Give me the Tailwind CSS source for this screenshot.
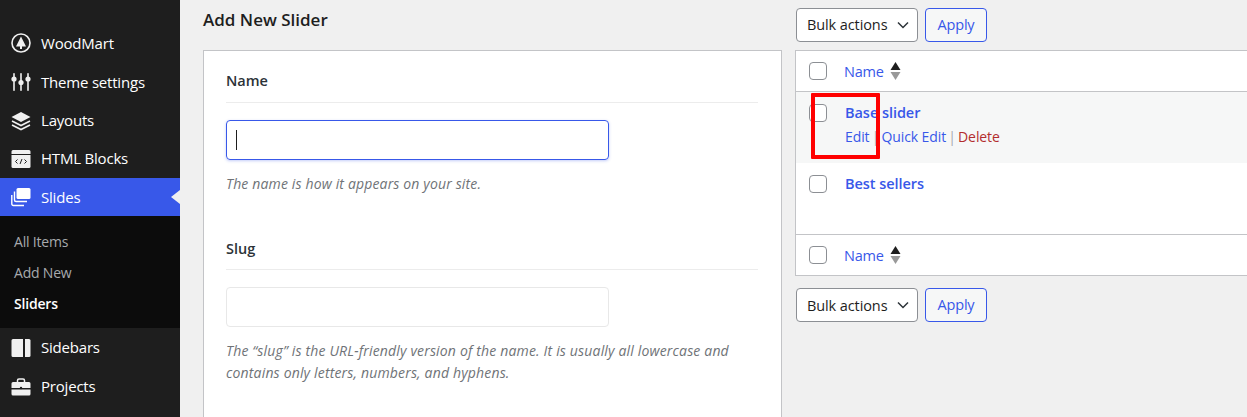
<!DOCTYPE html>
<html lang="en">
<head>
  <meta charset="UTF-8" />
  <title>Add New Slider</title>
  <script src="https://cdn.jsdelivr.net/npm/@tailwindcss/browser@4"></script>
</head>
<body class="bg-[#f0f0f0] text-[#1e1e1e] font-['Open_Sans','Noto_Sans',sans-serif] text-[14.5px] tracking-[-0.2px]">
  <div class="flex h-[417px] overflow-hidden">
    <!-- Sidebar -->
    <aside class="w-[180px] shrink-0 bg-[#1e1e1e] text-white text-[15px] pt-[24px]">
      <a class="flex items-center h-[38px] pl-[11px] gap-[10px]">
        <svg class="w-[20px] h-[20px]" viewBox="0 0 20 20"><circle cx="10" cy="10" r="9" fill="none" stroke="#f0f0f0" stroke-width="1.6"/><path d="M10 3.500 15 13.500H11V16H9V13.500H5Z" fill="#f0f0f0"/></svg>
        <span>WoodMart</span>
      </a>
      <a class="flex items-center h-[40px] pl-[11px] gap-[10px]">
        <svg class="w-[20px] h-[20px]" viewBox="0 0 20 20" fill="#f0f0f0"><rect x="2.200" y="1" width="1.600" height="18" rx=".8"/><rect x="9.200" y="1" width="1.600" height="18" rx=".8"/><rect x="16.200" y="1" width="1.600" height="18" rx=".8"/><circle cx="3" cy="7" r="2.600"/><circle cx="10" cy="10.500" r="2.600"/><circle cx="17" cy="7" r="2.600"/></svg>
        <span>Theme settings</span>
      </a>
      <a class="flex items-center h-[37px] pl-[11px] gap-[10px]">
        <svg class="w-[20px] h-[20px]" viewBox="0 0 20 20"><path d="M10 1 19.500 6 10 11 .5 6Z" fill="#f0f0f0"/><path d="M1 10 10 14.500 19 10M1 14 10 18.500 19 14" fill="none" stroke="#f0f0f0" stroke-width="1.600"/></svg>
        <span>Layouts</span>
      </a>
      <a class="flex items-center h-[39px] pl-[11px] gap-[10px]">
        <svg class="w-[20px] h-[20px]" viewBox="0 0 20 20"><path d="M2 1H18A1.500 1.500 0 0 1 19.500 2.500V5H.5V2.500A1.500 1.500 0 0 1 2 1Z" fill="#f0f0f0"/><path d="M.5 6H19.500V17.500A1.500 1.500 0 0 1 18 19H2A1.500 1.500 0 0 1 .5 17.500Z" fill="#f0f0f0"/><path d="M6.500 10.500 4.500 12.500 6.500 14.500M13.500 10.500 15.500 12.500 13.500 14.500M11 10 9 15" fill="none" stroke="#1e1e1e" stroke-width="1"/></svg>
        <span>HTML Blocks</span>
      </a>
      <a class="relative flex items-center h-[38px] pl-[11px] gap-[10px] bg-[#3858e9]">
        <svg class="w-[20px] h-[20px]" viewBox="0 0 20 20"><rect x="5.500" y="1" width="14" height="11" rx="1.500" fill="#fff"/><path d="M3.500 4.500V13A1.500 1.500 0 0 0 5 14.500H16" fill="none" stroke="#fff" stroke-width="1.400"/><path d="M.8 8V17A1.500 1.500 0 0 0 2.300 18.500H13" fill="none" stroke="#fff" stroke-width="1.400"/></svg>
        <span>Slides</span>
        <span class="absolute right-0 top-[12px] border-y-[7px] border-r-[9px] border-y-transparent border-r-[#f0f0f0]"></span>
      </a>
      <div class="bg-[#0c0c0c] h-[112px] pt-[9px] pl-[14px] text-[14px] text-[#a7aaad]">
        <a class="flex items-center h-[32px]">All Items</a>
        <a class="flex items-center h-[31px]">Add New</a>
        <a class="flex items-center h-[31px] text-white font-semibold">Sliders</a>
      </div>
      <a class="flex items-center h-[39px] pl-[11px] gap-[10px]">
        <svg class="w-[20px] h-[20px]" viewBox="0 0 20 20"><path d="M2 1H12V19H2A1.500 1.500 0 0 1 .5 17.500V2.500A1.500 1.500 0 0 1 2 1Z" fill="#f0f0f0"/><path d="M14 1H18A1.500 1.500 0 0 1 19.500 2.500V17.500A1.500 1.500 0 0 1 18 19H14Z" fill="#f0f0f0"/></svg>
        <span>Sidebars</span>
      </a>
      <a class="flex items-center h-[39px] pl-[11px] gap-[10px]">
        <svg class="w-[20px] h-[20px]" viewBox="0 0 20 20"><path d="M6.500 5V3.500A1.500 1.500 0 0 1 8 2H12A1.500 1.500 0 0 1 13.500 3.500V5" fill="none" stroke="#f0f0f0" stroke-width="1.500"/><path d="M2 5H18A1.500 1.500 0 0 1 19.500 6.500V11H.5V6.500A1.500 1.500 0 0 1 2 5Z" fill="#f0f0f0"/><path d="M.5 12.500H19.500V17A1.500 1.500 0 0 1 18 18.500H2A1.500 1.500 0 0 1 .5 17Z" fill="#f0f0f0"/><circle cx="10" cy="11" r="1.200" fill="#1e1e1e"/></svg>
        <span>Projects</span>
      </a>
    </aside>

    <!-- Add form -->
    <section class="w-[579px] shrink-0 ml-[23px]">
      <h2 class="h-[50px] pt-[8px] text-[17px] font-semibold tracking-normal leading-[24px]">Add New Slider</h2>
      <div class="bg-white border border-[#c3c4c7] h-[400px] px-[22px]">
        <div class="h-[52px] pt-[19px] border-b border-[#ececec] font-semibold text-[14.5px] tracking-normal leading-[22px] text-[#2c3338] w-[532px]">Name</div>
        <div class="mt-[17px] w-[383px] h-[40px] rounded-[4px] border border-[#3858e9] shadow-[0_1px_3px_rgba(56,88,233,0.3)] flex items-center pl-[9px]">
          <span class="w-px h-[20px] bg-[#1e1e1e]"></span>
        </div>
        <p class="mt-[13px] text-[14px] tracking-[0.15px] italic leading-[22px] text-[#6f7377]">The name is how it appears on your site.</p>
        <div class="mt-[43px] h-[32px] border-b border-[#ececec] font-semibold text-[14.5px] tracking-normal leading-[22px] text-[#2c3338] w-[532px]">Slug</div>
        <div class="mt-[17px] w-[383px] h-[40px] rounded-[4px] border border-[#e8e8e8]"></div>
        <p class="mt-[13px] w-[510px] text-[14px] tracking-[0.17px] italic leading-[22px] text-[#6f7377]">The “slug” is the URL-friendly version of the name. It is usually all lowercase and contains only letters, numbers, and hyphens.</p>
      </div>
    </section>

    <!-- Slider list -->
    <section class="relative ml-[13px] flex-1">
      <div class="flex items-center gap-[7px] h-[50px] pl-px pb-[1px]">
        <div class="w-[122px] h-[34px] rounded-[4px] border border-[#8c8f94] bg-white flex items-center justify-between pl-[10px] pr-[7px]">
          <span class="pt-px tracking-[-0.1px]">Bulk actions</span>
          <svg class="w-[14px] h-[14px]" viewBox="0 0 14 14"><path d="M2 4.500 7 9.500 12 4.500" fill="none" stroke="#2c3338" stroke-width="1.500"/></svg>
        </div>
        <div class="w-[62px] h-[34px] rounded-[4px] border border-[#3858e9] bg-[#f6f7f7] text-[#3858e9] flex items-center justify-center">Apply</div>
      </div>
      <div class="bg-white border border-[#c3c4c7] border-r-0 h-[226px]">
        <div class="flex items-center h-[41px] border-b border-[#c3c4c7] pl-[13px]">
          <span class="w-[18px] h-[18px] rounded-[4px] border border-[#8c8f94] bg-white"></span>
          <a class="ml-[17px] pt-px text-[#3858e9]">Name</a>
          <svg class="ml-[6px] w-[11px] h-[18px]" viewBox="0 0 10 18"><path d="M5 0 10 8H0Z" fill="#1e1e1e"/><path d="M5 18 10 10H0Z" fill="#999"/></svg>
        </div>
        <div class="flex h-[71px] bg-[#f6f7f7] pl-[13px] pt-[12px]">
          <span class="w-[18px] h-[18px] rounded-[4px] border border-[#8c8f94] bg-white"></span>
          <div class="ml-[18px]">
            <a class="block font-semibold tracking-[-0.05px] text-[#3858e9] leading-[18px]">Base slider</a>
            <div class="mt-[6px] text-[14px] tracking-[-0.1px] leading-[18px] text-[#a7aaad]"><a class="text-[#3858e9]">Edit</a><span class="inline-block w-[12px] text-center">|</span><a class="text-[#3858e9]">Quick Edit</a><span class="inline-block w-[12px] text-center">|</span><a class="text-[#b32d2e]">Delete</a></div>
          </div>
        </div>
        <div class="flex h-[72px] pl-[13px] pt-[12px] border-b border-[#c3c4c7]">
          <span class="w-[18px] h-[18px] rounded-[4px] border border-[#8c8f94] bg-white"></span>
          <a class="ml-[18px] font-semibold tracking-[-0.05px] text-[#3858e9] leading-[18px]">Best sellers</a>
        </div>
        <div class="flex items-center h-[40px] pl-[13px]">
          <span class="w-[18px] h-[18px] rounded-[4px] border border-[#8c8f94] bg-white"></span>
          <a class="ml-[17px] pt-px text-[#3858e9]">Name</a>
          <svg class="ml-[6px] w-[11px] h-[18px]" viewBox="0 0 10 18"><path d="M5 0 10 8H0Z" fill="#1e1e1e"/><path d="M5 18 10 10H0Z" fill="#999"/></svg>
        </div>
      </div>
      <div class="flex items-center gap-[7px] mt-[12px] pl-px">
        <div class="w-[122px] h-[34px] rounded-[4px] border border-[#8c8f94] bg-white flex items-center justify-between pl-[10px] pr-[7px]">
          <span class="pt-px tracking-[-0.1px]">Bulk actions</span>
          <svg class="w-[14px] h-[14px]" viewBox="0 0 14 14"><path d="M2 4.500 7 9.500 12 4.500" fill="none" stroke="#2c3338" stroke-width="1.500"/></svg>
        </div>
        <div class="w-[62px] h-[34px] rounded-[4px] border border-[#3858e9] bg-[#f6f7f7] text-[#3858e9] flex items-center justify-center">Apply</div>
      </div>
      <!-- red annotation box drawn over the row -->
      <div class="absolute left-[16px] top-[93px] w-[69px] h-[66px] border-4 border-[#ff0000] rounded-[1px]"></div>
    </section>
  </div>
</body>
</html>
